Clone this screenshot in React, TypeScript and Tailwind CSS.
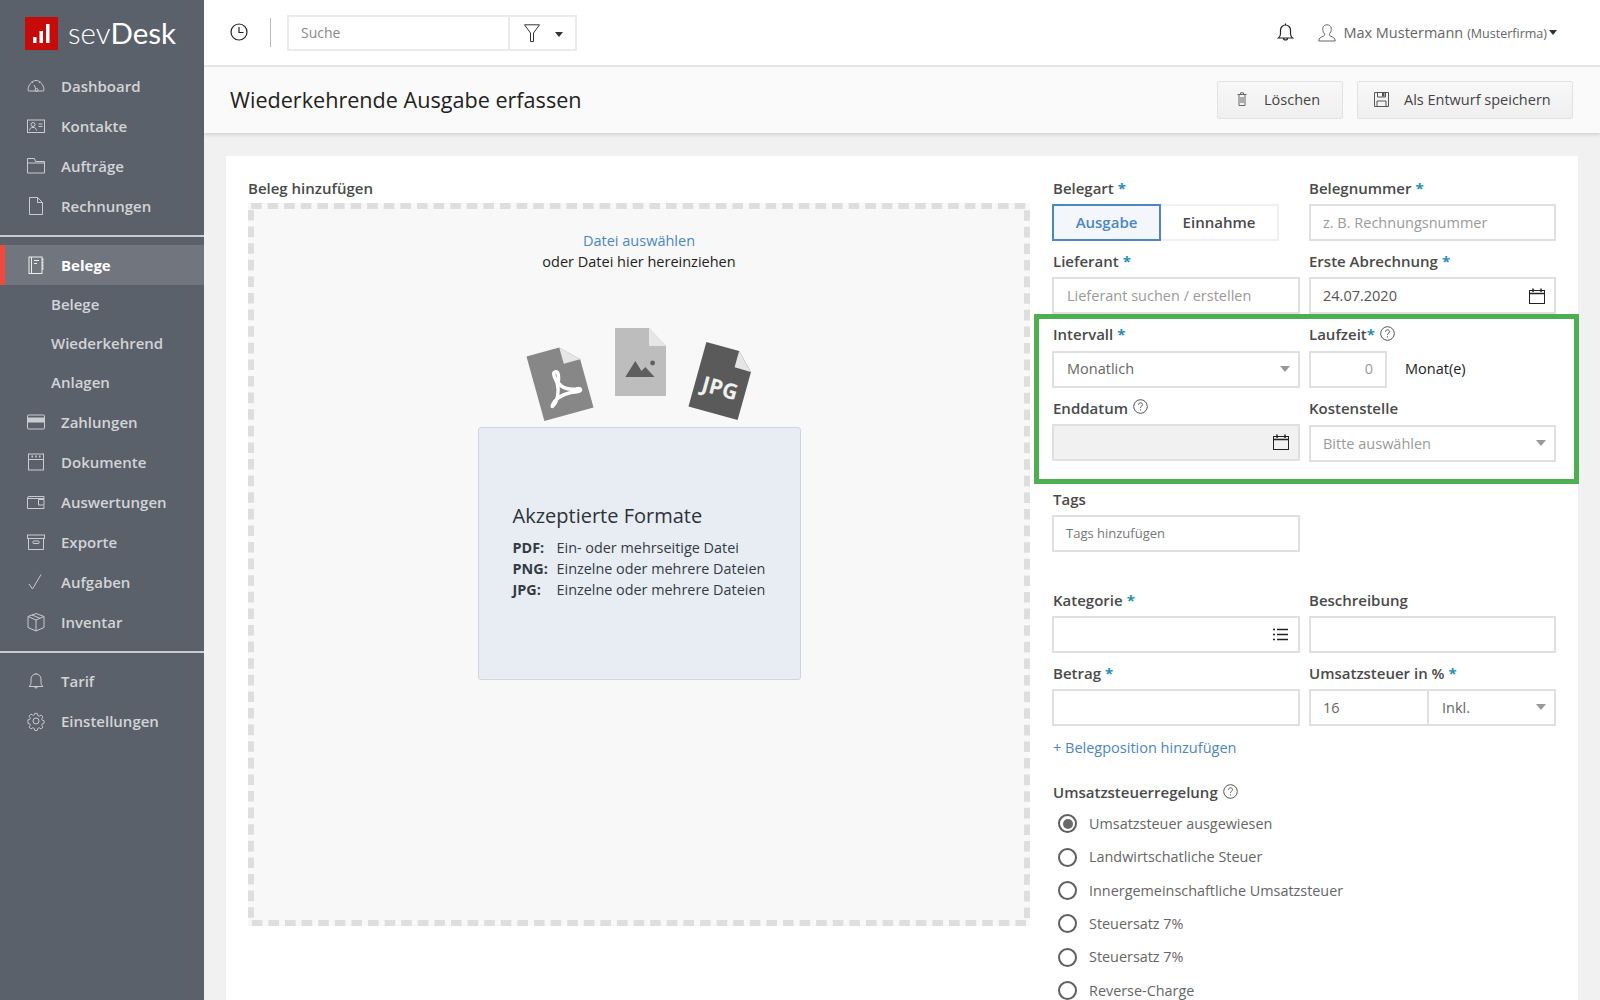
import React from "react";

const Ic = ({ children, w = 20, h = 20, vb = "0 0 20 20", c = "" }: any) => (
  <svg width={w} height={h} viewBox={vb} fill="none" stroke="currentColor" strokeWidth={1} className={c}>
    {children}
  </svg>
);

const icons: Record<string, React.ReactNode> = {
  dash: (<Ic><path d="M2.5 15h15c.6-1 .5-2.5 0-3.8C16.3 7.5 13.500 4.500 10 4.500S3.700 7.500 2.500 11.200C2 12.500 1.900 14 2.500 15z" /><path d="M8 9l2 4" /><circle cx="10.500" cy="14" r="1.500" /><path d="M6 5.500l.8 1.500M14 5.500l-.8 1.500" /></Ic>),
  contact: (<Ic><rect x="1.500" y="4" width="17" height="12.500" /><circle cx="7" cy="8.500" r="2" /><path d="M3.500 14.500c.2-2 1.500-2.800 2.500-3h2c1 .2 2.300 1 2.500 3" /><path d="M12.500 8h4M12.500 10.500h4" /></Ic>),
  folder: (<Ic><path d="M1.500 17V2.500h7l1 3h9V17z" /><path d="M1.500 7h17" /></Ic>),
  file: (<Ic><path d="M3.500 1.500h8l5 5v12h-13z" /><path d="M11.500 1.500v5h5" /></Ic>),
  note: (<Ic><rect x="3" y="2" width="13" height="16.500" /><path d="M5.500 2v16.500M8 5.500h5M8 8.500h3" /><path d="M16 4.500h1.500M16 7.500h1.500M16 10.500h1.500M16 13.500h1.500" strokeWidth={2} /></Ic>),
  card: (<Ic><rect x="1.500" y="3" width="17" height="14" rx="1" /><rect x="1.500" y="6" width="17" height="4" fill="currentColor" /></Ic>),
  doc: (<Ic><rect x="2.500" y="2" width="15" height="16" /><path d="M2.500 7.500h15" /><path d="M5.500 4.500h1.500M9.200 4.500h1.500M13 4.500h1.500" strokeWidth={2} /></Ic>),
  wallet: (<Ic><path d="M18 7V4.500H3A1.500 1.500 0 0 0 1.500 6v10.500H18V13.500" /><path d="M18 7.500h-5.500v5.500H18z" /><path d="M1.500 6.500H18" /></Ic>),
  box: (<Ic><rect x="1.500" y="3" width="17" height="3.500" /><path d="M2.500 6.500v11h15v-11" /><rect x="7" y="9" width="6" height="2.500" rx=".5" /></Ic>),
  check: (<Ic><path d="M3 12l3.500 5L15 2.500" /></Ic>),
  cube: (<Ic><path d="M10 1.500l8 3v11l-8 3.500-8-3.500v-11z" /><path d="M2 4.500L10 8l8-3.500M10 8v11M6 3l8 3.300" /></Ic>),
  bell: (<Ic><path d="M3 15.500c1.500-1.200 2-2 2-4V8a5 5 0 0 1 10 0v3.500c0 2 .5 2.800 2 4z" /><path d="M8.500 15.500a1.500 1.500 0 0 0 3 0" /><path d="M10 2v1" /></Ic>),
  gear: (<Ic><path d="M8.500 1.500h3l.5 2.500 1.500.7 2.200-1.300 2 2.200-1.400 2.100.6 1.500 2.100.5v2.900l-2.100.6-.6 1.400 1.400 2.200-2.100 2-2.100-1.300-1.500.6-.6 2.400h-2.800l-.6-2.400-1.500-.6-2.100 1.300-2.100-2 1.400-2.200-.6-1.400-2.100-.6V8.700l2.100-.5.6-1.500-1.400-2.100 2-2.200L7 3.700l1.500-.7z" transform="translate(1 1) scale(.9)" /><circle cx="10" cy="10" r="3" /></Ic>),
};

const Nav = ({ icon, label }: { icon: string; label: string }) => (
  <div className="flex h-10 items-center pl-[26px]">
    <span className="flex w-[20px] justify-center text-[#c9ccd0]">{icons[icon]}</span>
    <span className="ml-[15px] text-[15px] font-semibold text-[#d2d4d7]">{label}</span>
  </div>
);

const Sub = ({ label }: { label: string }) => (
  <div className="flex h-[39px] items-center pl-[51px] text-[15px] font-semibold text-[#d2d4d7]">{label}</div>
);

const Sidebar = () => (
  <aside className="flex h-[1000px] w-[204px] shrink-0 flex-col bg-[#5b616b]">
    <div className="flex h-[66px] items-start pl-[25px] pt-[17px]">
      <div className="flex h-[33px] w-[33px] items-end justify-center bg-[#c70a0a] pb-[7px]">
        <svg width="19" height="20" viewBox="0 0 19 20" fill="#fff">
          <rect x="1" y="14" width="3.500" height="6" />
          <rect x="7.500" y="8" width="3.500" height="12" />
          <rect x="14" y="1" width="3.500" height="19" />
        </svg>
      </div>
      <div className="ml-[10px] mt-[-3px] font-['Lato',sans-serif] text-[29.500px] leading-[38px] text-[#fff]">
        <span className="font-light">sev</span>Desk
      </div>
    </div>
    <Nav icon="dash" label="Dashboard" />
    <Nav icon="contact" label="Kontakte" />
    <Nav icon="folder" label="Aufträge" />
    <Nav icon="file" label="Rechnungen" />
    <div className="mt-[9px] mb-[8px] h-[2px] bg-[#c9ccd0]" />
    <div className="flex h-10 items-center border-l-[5px] border-[#f0493e] bg-[#70757e] pl-[21px]">
      <span className="flex w-[20px] justify-center text-[#eceded]">{icons.note}</span>
      <span className="ml-[15px] text-[15px] font-bold text-[#fff]">Belege</span>
    </div>
    <Sub label="Belege" />
    <Sub label="Wiederkehrend" />
    <Sub label="Anlagen" />
    <Nav icon="card" label="Zahlungen" />
    <Nav icon="doc" label="Dokumente" />
    <Nav icon="wallet" label="Auswertungen" />
    <Nav icon="box" label="Exporte" />
    <Nav icon="check" label="Aufgaben" />
    <Nav icon="cube" label="Inventar" />
    <div className="mt-[9px] mb-[8px] h-[2px] bg-[#c9ccd0]" />
    <Nav icon="bell" label="Tarif" />
    <Nav icon="gear" label="Einstellungen" />
  </aside>
);

const Caret = () => (
  <span className="inline-block h-0 w-0 border-x-[5px] border-t-[6px] border-x-transparent border-t-[#999]" />
);

const SmallCaret = () => (
  <span className="inline-block h-0 w-0 border-x-[4px] border-t-[5px] border-x-transparent border-t-[#333]" />
);

const CalendarI = () => (
  <svg width="16" height="16" viewBox="0 0 16 16" fill="none" stroke="#222" strokeWidth={1}>
    <rect x=".5" y="2.500" width="15" height="13" />
    <path d="M.5 5.500h15" strokeWidth={1.500} />
    <path d="M4 .5v3.500M12 .5v3.500" strokeWidth={1.500} />
  </svg>
);

const Help = () => (
  <svg width="15" height="15" viewBox="0 0 15 15" fill="none" stroke="#555" strokeWidth={1} className="ml-[5px] mt-[-2px]">
    <circle cx="7.500" cy="7.500" r="6.800" />
    <path d="M5.500 5.800c0-1.300 1-2 2-2s2 .7 2 1.800c0 1.600-2 1.500-2 3.300" />
    <path d="M7.500 10.300v1.200" />
  </svg>
);

const Star = ({ tight }: { tight?: boolean }) => (
  <span className={`font-bold text-[#1f8fb3] ${tight ? "" : "ml-[4px]"}`}>*</span>
);

const Label = ({ text, star, help, tight, inset }: { text: string; star?: boolean; help?: boolean; tight?: boolean; inset?: boolean }) => (
  <div className={`mb-[5px] flex h-[22px] items-center text-[15px] font-semibold text-[#4a4a4a] ${inset ? "pl-px" : ""}`}>
    <span>{text}</span>
    {star && <Star tight={tight} />}
    {help && <Help />}
  </div>
);

const Box = ({ children, c = "" }: { children?: React.ReactNode; c?: string }) => (
  <div className={`flex h-[37px] items-center border-2 border-[#e0e0e0] ${c}`}>{children}</div>
);

const Ph = ({ children }: { children: React.ReactNode }) => <span className="text-[#9a9a9a]">{children}</span>;

const Radio = ({ label, on }: { label: string; on?: boolean }) => (
  <div className="flex h-[33.300px] items-center">
    <span className="ml-[5px] flex h-[19px] w-[19px] items-center justify-center rounded-full border-[2.500px] border-[#5f5f5f]">
      {on && <span className="h-[10px] w-[10px] rounded-full bg-[#6a6a6a]" />}
    </span>
    <span className="ml-[12px] text-[14.400px] text-[#666]">{label}</span>
  </div>
);

const Row = ({ children, c = "" }: { children: React.ReactNode; c?: string }) => (
  <div className={`grid grid-cols-[248px_247px] gap-x-[9px] ${c}`}>{children}</div>
);

const Form = () => (
  <div className="relative w-[504px] shrink-0 pt-[11px] text-[14.500px]">
    <div className="absolute left-[-18px] top-[148px] z-10 h-[170px] w-[545px] border-[5px] border-[#4caf50]" />
    <Row>
      <div>
        <Label inset text="Belegart" star />
        <div className="flex h-[37px] w-[227px] items-center text-[15px] font-semibold">
          <div className="flex h-full w-[109px] items-center justify-center border-2 border-[#4a86c8] bg-[#f3f7fc] text-[#4a86c8]">Ausgabe</div>
          <div className="flex h-full flex-1 items-center justify-center border-y-2 border-r-2 border-[#f0f0f0] text-[#4a4a4a]">Einnahme</div>
        </div>
      </div>
      <div>
        <Label text="Belegnummer" star />
        <Box c="pl-[12px]"><Ph>z. B. Rechnungsnummer</Ph></Box>
      </div>
    </Row>
    <Row c="mt-[9.300px]">
      <div>
        <Label inset text="Lieferant" star />
        <Box c="pl-[13px]"><Ph>Lieferant suchen / erstellen</Ph></Box>
      </div>
      <div>
        <Label text="Erste Abrechnung" star />
        <Box c="justify-between pl-[12px] pr-[9px] text-[#555]">24.07.2020<CalendarI /></Box>
      </div>
    </Row>
    <Row c="mt-[9.300px]">
      <div>
        <Label inset text="Intervall" star />
        <Box c="justify-between pl-[13px] pr-[8px] text-[#666]">Monatlich<Caret /></Box>
      </div>
      <div>
        <Label text="Laufzeit" star help tight />
        <div className="flex items-center">
          <Box c="w-[78px] justify-end pr-[12px]"><Ph>0</Ph></Box>
          <span className="ml-[18px] text-[#222]">Monat(e)</span>
        </div>
      </div>
    </Row>
    <Row c="mt-[9.300px]">
      <div>
        <Label inset text="Enddatum" help />
        <Box c="justify-end bg-[#f1f1f1] pr-[9px]"><CalendarI /></Box>
      </div>
      <div>
        <Label text="Kostenstelle" />
        <Box c="mt-[6px] justify-between pl-[12px] pr-[8px]"><Ph>Bitte auswählen</Ph><Caret /></Box>
      </div>
    </Row>
    <Row c="mt-[26px]">
      <div>
        <Label inset text="Tags" />
        <Box c="pl-[12px]"><span className="text-[13px] text-[#777]">Tags hinzufügen</span></Box>
      </div>
    </Row>
    <Row c="mt-[37px]">
      <div>
        <Label inset text="Kategorie" star />
        <Box c="justify-end pr-[10px]">
          <svg width="15" height="13" viewBox="0 0 15 13" fill="none" stroke="#222" strokeWidth={1.600}>
            <path d="M4 1.500h11M4 6.500h11M4 11.500h11M0 1.500h2M0 6.500h2M0 11.500h2" />
          </svg>
        </Box>
      </div>
      <div>
        <Label text="Beschreibung" />
        <Box />
      </div>
    </Row>
    <Row c="mt-[9px]">
      <div>
        <Label inset text="Betrag" star />
        <Box />
      </div>
      <div>
        <Label text="Umsatzsteuer in %" star />
        <Box c="text-[#666]">
          <span className="flex h-full w-[118px] items-center border-r-2 border-[#e0e0e0] pl-[12px]">16</span>
          <span className="flex flex-1 items-center justify-between pl-[13px] pr-[8px]">Inkl.<Caret /></span>
        </Box>
      </div>
    </Row>
    <div className="pl-px">
      <div className="mt-[11px] h-[22px] leading-[22px] text-[#4a86c8]">+ Belegposition hinzufügen</div>
      <div className="mt-[22.600px]">
        <Label text="Umsatzsteuerregelung" help />
      </div>
      <div className="mt-[-1.300px]">
        <Radio label="Umsatzsteuer ausgewiesen" on />
        <Radio label="Landwirtschatliche Steuer" />
        <Radio label="Innergemeinschaftliche Umsatzsteuer" />
        <Radio label="Steuersatz 7%" />
        <Radio label="Steuersatz 7%" />
        <Radio label="Reverse-Charge" />
      </div>
    </div>
  </div>
);

const Formats = () => (
  <div className="mx-auto h-[253px] w-[323px] rounded-[3px] border border-[#cfd6df] bg-[#e8edf4] pl-[34px] pt-[74px] text-left">
    <div className="text-[20px] leading-[28px] text-[#2e3338]">Akzeptierte Formate</div>
    <div className="mt-[7px] grid grid-cols-[44px_1fr] text-[14.400px] leading-[21px] text-[#333b42]">
      <b className="font-bold">PDF:</b><span>Ein- oder mehrseitige Datei</span>
      <b className="font-bold">PNG:</b><span>Einzelne oder mehrere Dateien</span>
      <b className="font-bold">JPG:</b><span>Einzelne oder mehrere Dateien</span>
    </div>
  </div>
);

const DocIcons = () => (
  <div className="mt-[56px] flex justify-center">
    <svg width="240" height="99" viewBox="0 0 240 99" className="block">
      <g transform="translate(41 54) rotate(-15.500)">
        <path d="M-25.500-33.500H8.500L25.500-16.500V33.500H-25.500z" fill="#878787" />
        <path d="M8.500-33.500 25.500-16.500H8.500z" fill="#e6e6e6" />
        <path d="M-13 21C-8 18-3 10-3 0-4-6-5-11-2-11 2-11 0-4-2 0 0 6 6 10 14 11 19 11 19 15 14 14 6 12-4 13-10 17-14 20-15 23-13 21z" fill="none" stroke="#fff" strokeWidth={3.500} strokeLinejoin="round" />
      </g>
      <g transform="translate(96 0)">
        <path d="M0 0H34L51 18V68H0z" fill="#bdbdbd" />
        <path d="M34 0 51 18H34z" fill="#e6e6e6" />
        <path d="M10.300 49 20.300 33 26.500 43 30.300 39 39.600 49z" fill="#5e5e5e" />
        <circle cx="37.600" cy="35" r="2.400" fill="#5e5e5e" />
      </g>
      <g transform="translate(203 53) rotate(15.500)">
        <path d="M-25.500-33.500H8.500L25.500-16.500V33.500H-25.500z" fill="#5a5a5a" />
        <path d="M8.500-33.500 25.500-16.500H8.500z" fill="#e6e6e6" />
        <text x="0" y="15" textAnchor="middle" fontSize="21.500" fontWeight="700" fontFamily="'Open Sans',sans-serif" fill="#f0f0f0">JPG</text>
      </g>
    </svg>
  </div>
);

const Drop = () => (
  <div className="w-[782px] shrink-0">
    <div className="mb-[4px] mt-[11px] flex h-[22px] items-center text-[15px] font-semibold text-[#4a4a4a]">Beleg hinzufügen</div>
    <div className="relative h-[723px] bg-[#f8f8f8] pt-[27px] text-center">
      <svg width="782" height="723" className="absolute left-0 top-0">
        <rect x="3" y="3" width="776" height="717" fill="none" stroke="#dedede" strokeWidth={6} strokeDasharray="10.600 6" />
      </svg>
      <div className="text-[14.500px] leading-[21px] text-[#4a86c8]">Datei auswählen</div>
      <div className="text-[14.500px] leading-[21px] text-[#222]">oder Datei hier hereinziehen</div>
      <DocIcons />
      <Formats />
    </div>
  </div>
);

const TopBar = () => (
  <div className="flex h-[67px] shrink-0 items-center border-b-2 border-[#e6e6e6] bg-white pl-[26px] pr-[43px]">
    <svg width="18" height="18" viewBox="0 0 18 18" fill="none" stroke="#222" strokeWidth={1.200} className="mt-[-2px]">
      <circle cx="9" cy="9" r="8" />
      <path d="M9 4v5.500h4.500" />
    </svg>
    <div className="ml-[22px] h-[29px] w-px bg-[#bbb]" />
    <div className="ml-[16px] flex h-[36px] w-[290px] items-center border-2 border-[#ebebeb]">
      <span className="flex h-full w-[221px] items-center border-r-2 border-[#ebebeb] pl-[12px] text-[14px] text-[#8a8a8a]">Suche</span>
      <svg width="16" height="18" viewBox="0 0 16 18" fill="none" stroke="#333" strokeWidth={1} className="ml-[14px]">
        <path d="M.5.800h15L9.500 9v8.500h-3V9z" />
      </svg>
      <span className="ml-[15px] mt-[3px] flex"><SmallCaret /></span>
    </div>
    <div className="flex-1" />
    <svg width="17" height="19" viewBox="0 0 17 19" fill="none" stroke="#222" strokeWidth={1.200}>
      <path d="M1.500 15c1.500-1 2-2.500 2-4.500V7a5 5 0 0 1 10 0v3.500c0 2 .5 3.500 2 4.500z" />
      <path d="M6.500 15a2 2 0 0 0 4 0" />
      <path d="M8.500 .5v1.500" />
    </svg>
    <svg width="18" height="18" viewBox="0 0 18 18" fill="none" stroke="#666" strokeWidth={1} className="ml-[24px]">
      <path d="M.8 17c0-3 2-4 5-5 1-.4 1-2 .2-3-1.200-1.500-1.400-3-1.200-5C5 2 7 .8 9 .8s4 1.200 4.200 3.200c.2 2 0 3.500-1.200 5-.8 1-.8 2.600.2 3 3 1 5 2 5 5z" />
    </svg>
    <span className="ml-[7px] flex items-baseline text-[#666]">
      <span className="text-[14.500px]">Max Mustermann</span>
      <span className="ml-[4px] text-[12.500px]">(Musterfirma)</span>
    </span>
    <span className="ml-[2px] flex"><SmallCaret /></span>
  </div>
);

const Btn = ({ icon, label, c }: { icon: React.ReactNode; label: string; c: string }) => (
  <div className={`flex h-[38px] items-center rounded-[2px] border border-[#e2e2e2] bg-linear-to-b from-[#f8f8f8] to-[#efefef] text-[14.500px] text-[#444] ${c}`}>
    {icon}
    {label}
  </div>
);

const TitleBar = () => (
  <div className="flex h-[66px] shrink-0 items-center justify-between bg-[#fafafa] pl-[26px] pr-[27px] shadow-[0_2px_3px_rgba(0,0,0,0.12)]">
    <h1 className="text-[21.600px] font-normal text-[#222]">Wiederkehrende Ausgabe erfassen</h1>
    <div className="flex gap-[14px]">
      <Btn
        c="w-[126px] pl-[19px]"
        label="Löschen"
        icon={
          <svg width="10" height="14" viewBox="0 0 10 14" fill="none" stroke="#666" strokeWidth={1} className="mr-[17px] mt-[-2px]">
            <path d="M.5 2.500h9M2 2.500v11h6v-11M3.500 2.500V.8h3v1.700M4 5v6M6 5v6" />
          </svg>
        }
      />
      <Btn
        c="w-[216px] pl-[16px]"
        label="Als Entwurf speichern"
        icon={
          <svg width="15" height="15" viewBox="0 0 15 15" fill="none" stroke="#555" strokeWidth={1} className="mr-[15px] mt-[-2px]">
            <path d="M.5.500h14v14H.5z" />
            <path d="M3.500.5v4.500h8V.5M3 14.500V9h9v5.500" />
            <rect x="8.500" y="1.500" width="1.500" height="2.500" fill="#555" />
          </svg>
        }
      />
    </div>
  </div>
);

export default function App() {
  return (
    <div className="flex h-[1000px] w-[1600px] overflow-hidden bg-[#f1f1f1] font-['Open_Sans',sans-serif]">
      <Sidebar />
      <main className="flex min-w-0 flex-1 flex-col">
        <TopBar />
        <TitleBar />
        <div className="mx-[22px] mt-[23px] flex min-h-0 flex-1 gap-[22px] bg-white pl-[22px] pt-[10px]">
          <Drop />
          <Form />
        </div>
      </main>
    </div>
  );
}
